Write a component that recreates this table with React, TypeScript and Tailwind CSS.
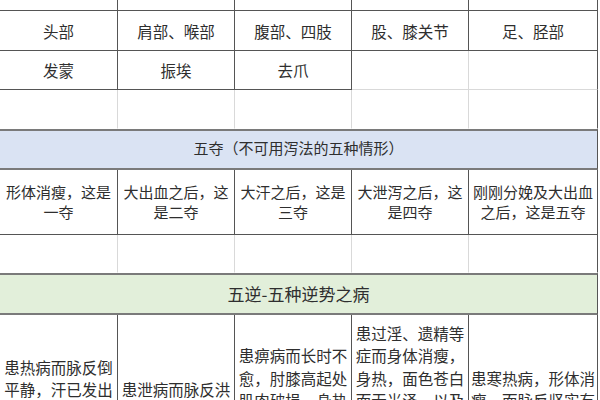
const DR = 'border-r-[#555555]'
const LR = 'border-r-[#d9d9d9]'
const DB = 'border-b-[#555555]'
const LB = 'border-b-[#d9d9d9]'

type CellProps = {
  r: string
  b: string
  lines?: string[]
  leading?: string
}

function Cell({ r, b, lines = [], leading = 'leading-[20px]' }: CellProps) {
  return (
    <div className={`flex flex-col items-center justify-center overflow-hidden border-r border-b text-center ${r} ${b} ${leading}`}>
      {lines.map((line, i) => (
        <span key={i} className="whitespace-nowrap">
          {line}
        </span>
      ))}
    </div>
  )
}

const cols = 'grid grid-cols-[118px_117px_117px_117px_129px]'

const wuni = [
  ['患热病而脉反倒', '平静，汗已发出', '而脉反倒见大而', '躁动，这是一逆'],
  ['患泄病而脉反洪', '大，这是二逆'],
  ['患痹病而长时不', '愈，肘膝高起处', '肌肉破损，身热', '，而脉象偏绝，', '这是三逆'],
  ['患过淫、遗精等', '症而身体消瘦，', '身热，面色苍白', '而无光泽，以及', '大便下血块，而', '且病情严重，这', '是四逆'],
  ['患寒热病，形体消', '瘦，而脉反坚实有', '力，这是五逆'],
]

export default function App() {
  return (
    <div className="h-[400px] w-[600px] overflow-hidden bg-white font-['Noto_Sans_CJK_SC','Microsoft_YaHei',sans-serif] text-[15.5px] text-[#2e2e2e]">
      <div className="w-[598px]">
        {/* partial top row */}
        <div className={`${cols} h-[11px]`}>
          {[0, 1, 2, 3, 4].map((i) => (
            <Cell key={i} r={DR} b={DB} />
          ))}
        </div>

        {/* body parts */}
        <div className={`${cols} h-[40px]`}>
          {['头部', '肩部、喉部', '腹部、四肢', '股、膝关节', '足、胫部'].map((t) => (
            <Cell key={t} r={DR} b={DB} lines={[t]} />
          ))}
        </div>

        <div className={`${cols} h-[39px]`}>
          <Cell r={DR} b={DB} lines={['发蒙']} />
          <Cell r={DR} b={DB} lines={['振埃']} />
          <Cell r={DR} b={DB} lines={['去爪']} />
          <Cell r={LR} b={LB} />
          <Cell r={DR} b={LB} />
        </div>

        <div className={`${cols} h-[39px]`}>
          <Cell r={LR} b="border-b-transparent" />
          <Cell r={LR} b="border-b-transparent" />
          <Cell r={LR} b="border-b-transparent" />
          <Cell r={LR} b="border-b-transparent" />
          <Cell r={DR} b="border-b-transparent" />
        </div>

        {/* 五夺 */}
        <div className="flex h-[41px] items-center justify-center border-y-2 border-r border-y-[#7a7a7a] border-r-[#555555] bg-[#dae3f3] pb-[2px] text-[15px]">
          五夺（不可用泻法的五种情形）
        </div>

        <div className={`${cols} h-[65px] text-[15px]`}>
          <Cell r={DR} b={DB} lines={['形体消瘦，这是', '一夺']} />
          <Cell r={DR} b={DB} lines={['大出血之后，这', '是二夺']} />
          <Cell r={DR} b={DB} lines={['大汗之后，这是', '三夺']} />
          <Cell r={DR} b={DB} lines={['大泄泻之后，这', '是四夺']} />
          <Cell r={DR} b={DB} lines={['刚刚分娩及大出血', '之后，这是五夺']} />
        </div>

        <div className={`${cols} h-[38px]`}>
          <Cell r={LR} b="border-b-transparent" />
          <Cell r={LR} b="border-b-transparent" />
          <Cell r={LR} b="border-b-transparent" />
          <Cell r={LR} b="border-b-transparent" />
          <Cell r={DR} b="border-b-transparent" />
        </div>

        {/* 五逆 */}
        <div className="flex h-[42px] items-center justify-center border-y-2 border-r border-y-[#7a7a7a] border-r-[#555555] bg-[#e2efda] pb-[1px] text-[17px]">
          五逆-五种逆势之病
        </div>

        <div className={`${cols} h-[172px] text-[15.5px]`}>
          {wuni.map((lines, i) => (
            <Cell key={i} r={DR} b={DB} lines={lines} leading="leading-[22.5px]" />
          ))}
        </div>
      </div>
    </div>
  )
}
